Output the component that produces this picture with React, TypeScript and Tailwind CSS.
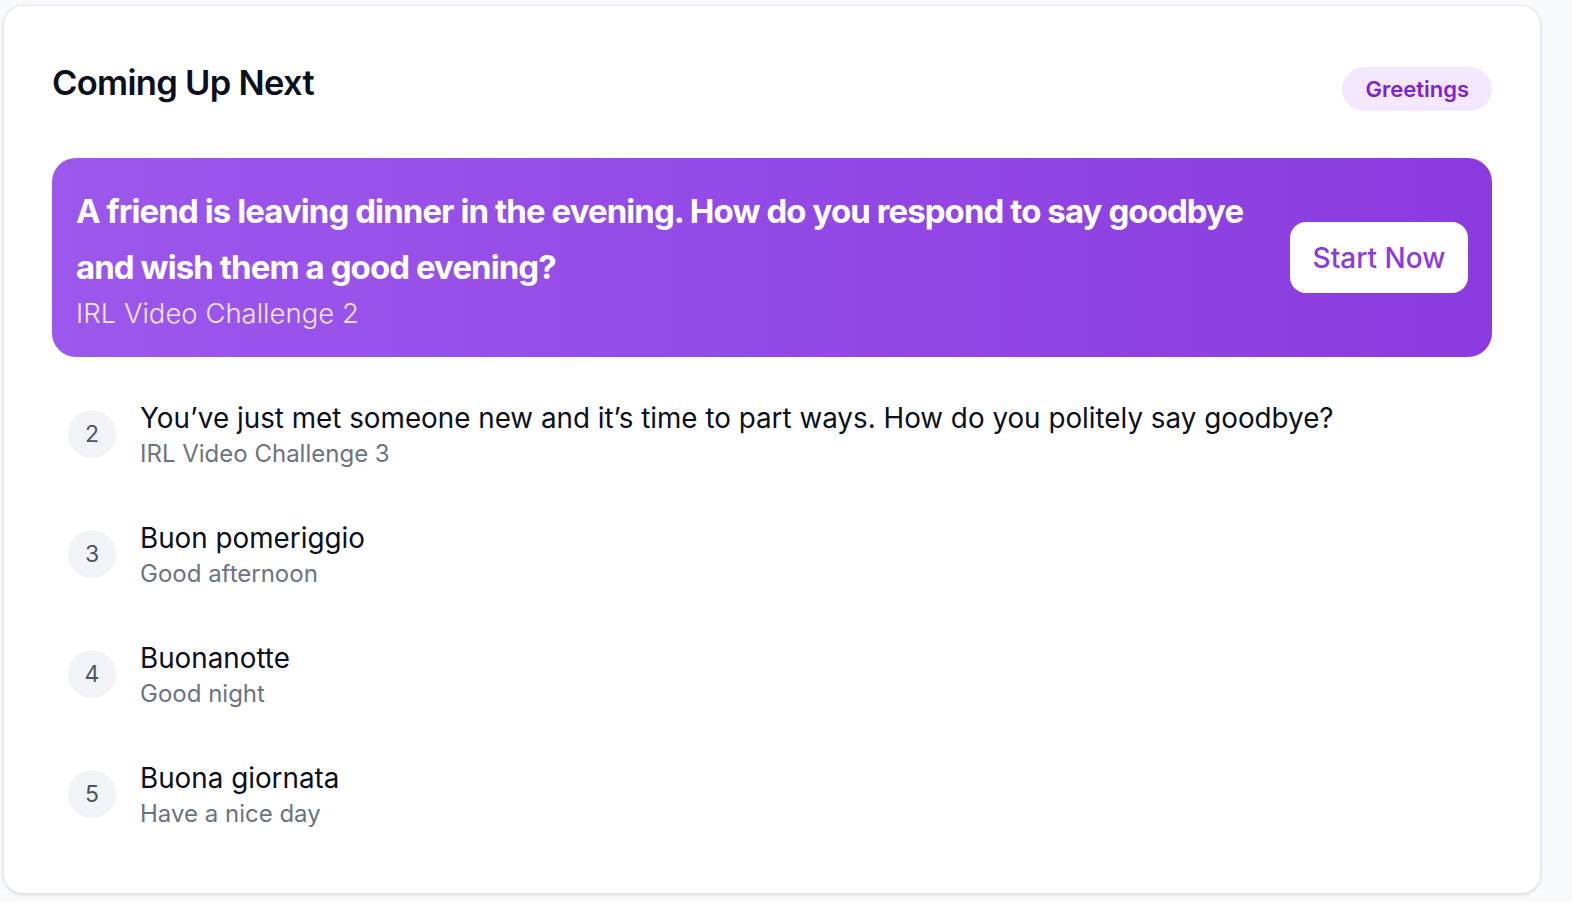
const upcoming = [
  {
    n: 2,
    title: 'You’ve just met someone new and it’s time to part ways. How do you politely say goodbye?',
    sub: 'IRL Video Challenge 3',
  },
  { n: 3, title: 'Buon pomeriggio', sub: 'Good afternoon' },
  { n: 4, title: 'Buonanotte', sub: 'Good night' },
  { n: 5, title: 'Buona giornata', sub: 'Have a nice day' },
];

export default function App() {
  return (
    <div
      className="min-h-[902px] bg-[#f8f9fb] pl-[3px] pt-[5px]"
      style={{ fontFamily: 'Inter, "Noto Sans", sans-serif' }}
    >
      <div className="w-[1538px] h-[889px] bg-white border border-[#e2e6ee] rounded-[20px] shadow-sm px-[48px] pt-[51px]">
        <div className="flex items-start justify-between">
          <h2 className="text-[34.5px] leading-[52px] font-semibold tracking-[-0.02em] text-[#0b1020]">
            Coming Up Next
          </h2>
          <span className="mt-[10px] h-[44px] px-[23px] flex items-center rounded-full bg-[#f3e8ff] text-[#7e22ce] text-[22px] font-semibold">
            Greetings
          </span>
        </div>

        <div className="mt-[47px] h-[199px] rounded-[24px] bg-gradient-to-r from-[#9c57ec] to-[#8b3adf] px-[24px] flex items-center justify-between">
          <div className="flex flex-col -mt-[2px]">
            <p className="text-[33px] leading-[56px] font-bold tracking-[-0.028em] text-white max-w-[1190px]">
              A friend is leaving dinner in the evening. How do you respond to say goodbye and wish them a good evening?
            </p>
            <p className="text-[27.5px] leading-[36px] font-light text-white/85">IRL Video Challenge 2</p>
          </div>
          <button className="shrink-0 w-[178px] h-[71px] rounded-[16px] bg-white text-[#8b3adf] text-[28px] font-medium">
            Start Now
          </button>
        </div>

        <ul className="mt-[43px] pl-[16px] flex flex-col gap-[48px]">
          {upcoming.map((item) => (
            <li key={item.n} className="flex items-center gap-[24px]">
              <span className="mb-[4px] w-[48px] h-[48px] rounded-full bg-[#f2f3f6] text-[#4b5563] text-[23px] flex items-center justify-center shrink-0">
                {item.n}
              </span>
              <div className="flex flex-col">
                <span className="text-[27.8px] leading-[36px] text-[#0b1020]">{item.title}</span>
                <span className="text-[24px] leading-[36px] text-[#6b7280]">{item.sub}</span>
              </div>
            </li>
          ))}
        </ul>
      </div>
    </div>
  );
}
